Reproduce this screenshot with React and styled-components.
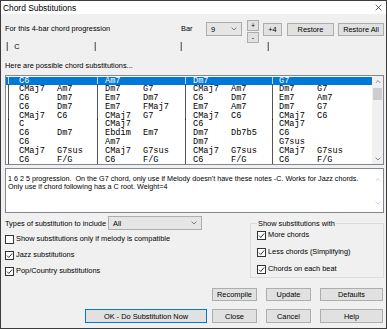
import React from 'react';
import styled, { createGlobalStyle } from 'styled-components';

const GlobalStyle = createGlobalStyle`
  html, body {
    margin: 0;
    padding: 0;
    background: #fff;
  }
  body {
    font-family: "Liberation Sans", Arial, sans-serif;
  }
  * {
    box-sizing: border-box;
  }
`;

const Window = styled.div`
  width: 387px;
  height: 329px;
  border: 1px solid #3c3c3c;
  display: flex;
  flex-direction: column;
  background: #f0f0f0;
  overflow: hidden;
  font-size: 7.4px;
  color: #000;
`;

const TitleBar = styled.div`
  height: 13px;
  flex: none;
  background: #fff;
  display: flex;
  align-items: center;
  justify-content: space-between;
  padding: 0 4px 0 2px;
`;

const Title = styled.span`
  font-size: 8.4px;
  line-height: 10px;
`;

const Body = styled.div`
  flex: 1;
  display: flex;
  flex-direction: column;
  padding: 0 2px 0 4px;
`;

const TopRow = styled.div`
  display: flex;
  align-items: flex-start;
  height: 23px;
  margin-top: 6px;
`;

const Label = styled.span`
  line-height: 9px;
  margin-top: ${(p) => p.$top || 0}px;
  flex: ${(p) => (p.$grow ? 1 : 'none')};
  width: ${(p) => (p.$w ? `${p.$w}px` : 'auto')};
  white-space: nowrap;
`;

const Combo = styled.div`
  width: ${(p) => p.$w}px;
  height: 14px;
  margin-top: ${(p) => p.$top || 0}px;
  background: #e5e5e5;
  border: 1px solid #adadad;
  display: flex;
  align-items: center;
  justify-content: space-between;
  padding: 0 4px 0 4px;
  flex: none;
`;

const Button = styled.div`
  width: ${(p) => p.$w}px;
  height: ${(p) => p.$h || 13}px;
  margin-top: ${(p) => p.$top || 0}px;
  margin-left: ${(p) => p.$left || 0}px;
  background: #e1e1e1;
  border: 1px solid ${(p) => (p.$default ? '#0078d7' : '#adadad')};
  display: flex;
  align-items: center;
  justify-content: center;
  flex: none;
  white-space: nowrap;
  font-size: ${(p) => p.$fs || 7.4}px;
`;

const Stepper = styled.div`
  display: flex;
  flex-direction: column;
  gap: 1px;
  margin-left: 5px;
  flex: none;
`;

const ProgressionRow = styled.div`
  display: flex;
  align-items: center;
  height: 9px;
  margin-top: -1px;
  padding-left: 1px;
`;

const BarCell = styled.div`
  width: ${(p) => p.$w}px;
  display: flex;
  align-items: center;
  gap: 6px;
  flex: none;
  line-height: 9px;
`;

const Pipe = styled.span`
  display: inline-block;
  font-size: 9px;
  color: #000;
  will-change: transform;
`;

const Hint = styled.div`
  line-height: 9px;
  margin-top: 10px;
`;

const ListBox = styled.div`
  height: 90px;
  margin-top: 5px;
  border: 1px solid #828790;
  background: #fff;
  display: flex;
`;

const Rows = styled.div`
  flex: 1;
  padding-top: 0.5px;
  font-family: "Liberation Mono", "Courier New", monospace;
  font-size: 8.6px;
  overflow: hidden;
`;

const ListRow = styled.div`
  height: 8.8px;
  line-height: 8.8px;
  display: flex;
  background: ${(p) => (p.$selected ? '#0078d7' : 'transparent')};
  color: ${(p) => (p.$selected ? '#fff' : '#000')};
`;

const Cell = styled.div`
  width: ${(p) => p.$w}px;
  flex: none;
  display: grid;
  grid-template-columns: ${(p) => p.$lead}px 38px 1fr;
  white-space: pre;
`;

const Sep = styled.span`
  display: inline-block;
  will-change: transform;
`;

const ScrollBar = styled.div`
  width: 11px;
  flex: none;
  background: #f0f0f0;
  display: flex;
  flex-direction: column;
  align-items: center;
`;

const ScrollArrow = styled.div`
  height: 11px;
  width: 100%;
  display: flex;
  align-items: center;
  justify-content: center;
`;

const Thumb = styled.div`
  width: 9px;
  height: 12px;
  margin-top: 1px;
  background: #cdcdcd;
`;

const Track = styled.div`
  flex: 1;
`;

const DescBox = styled.div`
  height: 45px;
  margin-top: 3px;
  border: 1px solid #828790;
  background: #fff;
  display: flex;
`;

const DescText = styled.div`
  flex: 1;
  padding: 6px 0 0 2px;
  line-height: 8px;
  font-size: 7.2px;
`;

const DescScroll = styled.div`
  width: 11px;
  display: flex;
  flex-direction: column;
  justify-content: space-between;
  padding: 5px 0 4px;
`;

const Options = styled.div`
  display: flex;
  margin-top: 3px;
  height: 62px;
`;

const LeftOptions = styled.div`
  width: 245px;
  display: flex;
  flex-direction: column;
`;

const TypesRow = styled.div`
  display: flex;
  align-items: center;
  height: 14px;
`;

const CheckList = styled.div`
  display: flex;
  flex-direction: column;
  gap: ${(p) => p.$gap}px;
  margin-top: ${(p) => p.$top}px;
`;

const CheckRow = styled.label`
  display: flex;
  align-items: center;
  gap: 2px;
  height: 10px;
  line-height: 10px;
  white-space: nowrap;
`;

const Box = styled.span`
  width: 9px;
  height: 9px;
  border: 1px solid #333;
  background: #fff;
  display: flex;
  align-items: center;
  justify-content: center;
  flex: none;
`;

const Group = styled.fieldset`
  flex: 1;
  margin: 3px 0 0 0;
  padding: 0 0 0 6px;
  border: 1px solid #dcdcdc;
  height: 59px;
`;

const Legend = styled.legend`
  padding: 0 1px;
  margin-left: 0;
  line-height: 9px;
`;

const ButtonRow = styled.div`
  display: flex;
  justify-content: flex-end;
  margin-top: ${(p) => p.$top}px;
  padding-right: 1px;
`;

const Chevron = ({ size = 6, color = '#555' }) => (
  <svg width={size} height={size * 0.6} viewBox="0 0 10 6">
    <path d="M1 1 L5 5 L9 1" fill="none" stroke={color} strokeWidth="1.2" />
  </svg>
);

const ChevronUp = ({ size = 6, color = '#555' }) => (
  <svg width={size} height={size * 0.6} viewBox="0 0 10 6">
    <path d="M1 5 L5 1 L9 5" fill="none" stroke={color} strokeWidth="1.2" />
  </svg>
);

const Check = () => (
  <svg width="7" height="7" viewBox="0 0 10 10">
    <path d="M1.5 5.2 L4 7.8 L8.8 2" fill="none" stroke="#222" strokeWidth="1.3" />
  </svg>
);

const Checkbox = ({ checked, children }) => (
  <CheckRow>
    <Box>{checked && <Check />}</Box>
    {children}
  </CheckRow>
);

const colWidths = [89, 88, 87, 99];
const leads = [13, 10, 10, 9];

const rows = [
  [['C6', ''], ['Am7', ''], ['Dm7', ''], ['G7', '']],
  [['CMaj7', 'Am7'], ['Dm7', 'G7'], ['CMaj7', 'Am7'], ['Dm7', 'G7']],
  [['C6', 'Dm7'], ['Em7', 'Dm7'], ['C6', 'Dm7'], ['Em7', 'Am7']],
  [['C6', 'Dm7'], ['Em7', 'FMaj7'], ['Em7', 'Am7'], ['Dm7', 'G7']],
  [['CMaj7', 'C6'], ['CMaj7', 'G7'], ['CMaj7', 'C6'], ['CMaj7', 'C6']],
  [['C', ''], ['CMaj7', ''], ['C6', ''], ['CMaj7', '']],
  [['C6', 'Dm7'], ['Ebdim', 'Em7'], ['Dm7', 'Db7b5'], ['C6', '']],
  [['C6', ''], ['Am7', ''], ['Dm7', ''], ['G7sus', '']],
  [['CMaj7', 'G7sus'], ['CMaj7', 'G7sus'], ['CMaj7', 'G7sus'], ['CMaj7', 'G7sus']],
  [['C6', 'F/G'], ['C6', 'F/G'], ['C6', 'F/G'], ['C6', 'F/G']],
];

export default function App() {
  return (
    <>
      <GlobalStyle />
      <Window>
        <TitleBar>
          <Title>Chord Substitutions</Title>
          <svg width="7" height="7" viewBox="0 0 10 10">
            <path d="M1 1 L9 9 M9 1 L1 9" stroke="#222" strokeWidth="1" />
          </svg>
        </TitleBar>
        <Body>
          <TopRow>
            <Label $grow $top={4}>For this 4-bar chord progression</Label>
            <Label $w={25} $top={4}>Bar</Label>
            <Combo $w={36} $top={2}>
              <span>9</span>
              <Chevron />
            </Combo>
            <Stepper>
              <Button $w={12} $h={11} $fs={7}>+</Button>
              <Button $w={12} $h={11} $fs={7}>-</Button>
            </Stepper>
            <Button $w={19} $top={3} $left={4}>+4</Button>
            <Button $w={47} $top={3} $left={5}>Restore</Button>
            <Button $w={46} $top={3} $left={4}>Restore All</Button>
          </TopRow>
          <ProgressionRow>
            <BarCell $w={88}>
              <Pipe>|</Pipe>
              <span>C</span>
            </BarCell>
            <BarCell $w={86}><Pipe>|</Pipe></BarCell>
            <BarCell $w={87}><Pipe>|</Pipe></BarCell>
            <BarCell $w={20}><Pipe>|</Pipe></BarCell>
          </ProgressionRow>
          <Hint>Here are possible chord substitutions...</Hint>
          <ListBox>
            <Rows>
              {rows.map((row, i) => (
                <ListRow key={i} $selected={i === 0}>
                  {row.map(([a, b], j) => (
                    <Cell key={j} $w={colWidths[j]} $lead={leads[j]}>
                      <Sep>|</Sep>
                      <span>{a}</span>
                      <span>{b}</span>
                    </Cell>
                  ))}
                </ListRow>
              ))}
            </Rows>
            <ScrollBar>
              <ScrollArrow>
                <ChevronUp size={6} color="#606060" />
              </ScrollArrow>
              <Thumb />
              <Track />
              <ScrollArrow>
                <Chevron size={6} color="#606060" />
              </ScrollArrow>
            </ScrollBar>
          </ListBox>
          <DescBox>
            <DescText>
              1 6 2 5 progression.&nbsp; On the G7 chord, only use if Melody doesn't have these notes -C. Works for Jazz chords.
              <br />
              Only use if chord following has a C root. Weight=4
            </DescText>
            <DescScroll>
              <ScrollArrow>
                <ChevronUp size={6} color="#c0c0c0" />
              </ScrollArrow>
              <ScrollArrow>
                <Chevron size={6} color="#c0c0c0" />
              </ScrollArrow>
            </DescScroll>
          </DescBox>
          <Options>
            <LeftOptions>
              <TypesRow>
                <Label $w={103}>Types of substitution to include</Label>
                <Combo $w={94}>
                  <span>All</span>
                  <Chevron />
                </Combo>
              </TypesRow>
              <CheckList $gap={6} $top={4}>
                <Checkbox>Show substitutions only if melody is compatible</Checkbox>
                <Checkbox checked>Jazz substitutions</Checkbox>
                <Checkbox checked>Pop/Country substitutions</Checkbox>
              </CheckList>
            </LeftOptions>
            <Group>
              <Legend>Show substitutions with</Legend>
              <CheckList $gap={7} $top={2}>
                <Checkbox checked>More chords</Checkbox>
                <Checkbox checked>Less chords (Simplifying)</Checkbox>
                <Checkbox checked>Chords on each beat</Checkbox>
              </CheckList>
            </Group>
          </Options>
          <ButtonRow $top={10}>
            <Button $w={45}>Recompile</Button>
            <Button $w={45} $left={9}>Update</Button>
            <Button $w={63} $left={9}>Defaults</Button>
          </ButtonRow>
          <ButtonRow $top={8}>
            <Button $w={122} $h={14} $default>OK - Do Substitution Now</Button>
            <Button $w={45} $h={14} $left={5}>Close</Button>
            <Button $w={45} $h={14} $left={9}>Cancel</Button>
            <Button $w={63} $h={14} $left={9}>Help</Button>
          </ButtonRow>
        </Body>
      </Window>
    </>
  );
}
